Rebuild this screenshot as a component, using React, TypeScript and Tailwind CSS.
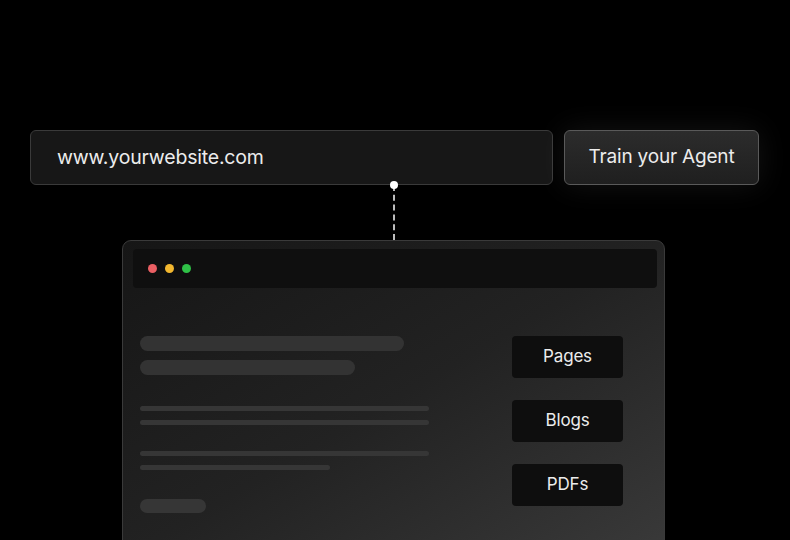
export default function App() {
  const font = { fontFamily: 'Inter, "Noto Sans", sans-serif' }
  return (
    <div className="h-[540px] w-[790px] overflow-hidden bg-black text-[#ececec]" style={font}>
      <div className="pl-[30px] pt-[130px]">
        <div className="flex gap-[11px]">
          <div className="flex h-[55px] w-[523px] items-center rounded-[6px] border border-[#3a3a3a] bg-[#171717] pl-[26px] text-[19.5px] tracking-[-.01em]">
            www.yourwebsite.com
          </div>
          <button className="flex h-[55px] w-[195px] items-center justify-center rounded-[6px] border border-[#5a5a5a] bg-gradient-to-b from-[#2c2c2c] to-[#1f1f1f] text-[19px] tracking-[-.01em] shadow-[0_0_30px_rgba(255,255,255,.08)]">
            Train your Agent
          </button>
        </div>

        <div className="relative ml-[363px] h-[55px] w-0 border-l-2 border-dashed border-[#bdbdbd]">
          <span className="absolute -left-[5px] -top-[4px] h-[8px] w-[8px] rounded-full bg-white" />
        </div>

        <div className="ml-[92px] h-[320px] w-[543px] rounded-[9px] border border-[#3a3a3a] bg-gradient-to-br from-[#161616] via-[#222] to-[#3a3a3a] pl-[10px] pr-[7px] pt-[8px]">
          <div className="flex h-[39px] items-center gap-[8px] rounded-[4px] bg-[#0f0f0f] pl-[15px]">
            <span className="h-[9px] w-[9px] rounded-full bg-[#ea5f63]" />
            <span className="h-[9px] w-[9px] rounded-full bg-[#f2b72f]" />
            <span className="h-[9px] w-[9px] rounded-full bg-[#2fc147]" />
          </div>

          <div className="flex pt-[48px]">
            <div className="flex-1 pl-[7px]">
              <div className="h-[15px] w-[264px] rounded-full bg-[#333]" />
              <div className="mt-[9px] h-[15px] w-[215px] rounded-full bg-[#333]" />
              <div className="mt-[31px] h-[5px] w-[289px] rounded-full bg-[#363636]" />
              <div className="mt-[9px] h-[5px] w-[289px] rounded-full bg-[#363636]" />
              <div className="mt-[26px] h-[5px] w-[289px] rounded-full bg-[#363636]" />
              <div className="mt-[9px] h-[5px] w-[190px] rounded-full bg-[#363636]" />
              <div className="mt-[29px] h-[14px] w-[66px] rounded-full bg-[#363636]" />
            </div>
            <div className="mr-[34px] flex w-[111px] flex-col gap-[22px]">
              {['Pages', 'Blogs', 'PDFs'].map((label) => (
                <div
                  key={label}
                  className="flex h-[42px] items-center justify-center rounded-[4px] bg-[#0e0e0e] text-[17px] tracking-[-.01em] text-[#ececec]"
                >
                  {label}
                </div>
              ))}
            </div>
          </div>
        </div>
      </div>
    </div>
  )
}
